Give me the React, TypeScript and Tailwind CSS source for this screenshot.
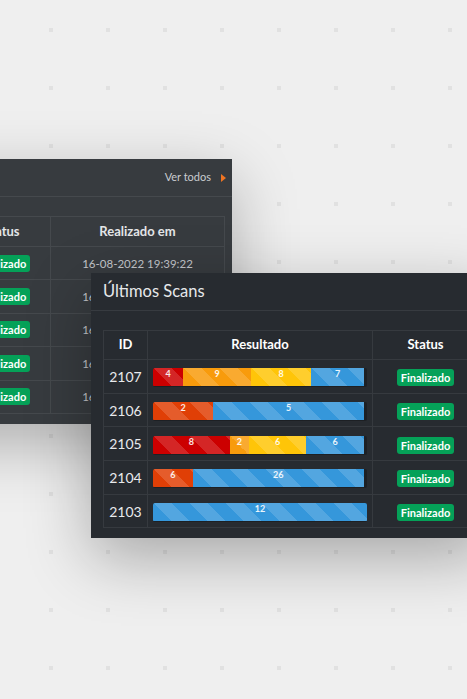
const font = { fontFamily: "Lato, 'Noto Sans', sans-serif" };

type Level = "critical" | "high" | "medium" | "low" | "info";

const segColor: Record<Level, string> = {
    critical: "bg-[#cc0000]",
    high: "bg-[#e03f06]",
    medium: "bg-[#f89b0c]",
    low: "bg-[#ffc508]",
    info: "bg-[#3597db]",
};

const scans: { id: number; result: [Level, number][] }[] = [
    { id: 2107, result: [["critical", 4], ["medium", 9], ["low", 8], ["info", 7]] },
    { id: 2106, result: [["high", 2], ["info", 5]] },
    { id: 2105, result: [["critical", 8], ["medium", 2], ["low", 6], ["info", 6]] },
    { id: 2104, result: [["high", 6], ["info", 26]] },
    { id: 2103, result: [["info", 12]] },
];

function ResultBar({ result }: { result: [Level, number][] }) {
    const total = result.reduce((s, r) => s + r[1], 0);
    const scale = result.length > 1 ? 98.6 : 100;
    return (
        <div className="flex h-[19px] w-full overflow-hidden rounded-[2px] bg-[#1d2024] pb-px">
            {result.map(([level, n], i) => (
                <div
                    key={i}
                    className={`${segColor[level]} h-full bg-[linear-gradient(45deg,rgba(255,255,255,.15)_25%,transparent_25%,transparent_50%,rgba(255,255,255,.15)_50%,rgba(255,255,255,.15)_75%,transparent_75%,transparent)] bg-[length:36px_36px] text-center text-[9px] font-bold leading-[11px] text-white/90`}
                    style={{ width: `${(n / total) * scale}%` }}
                >
                    {n}
                </div>
            ))}
        </div>
    );
}

function Badge() {
    return (
        <span className="inline-block h-[17px] w-[57px] rounded-[3px] bg-[#05a158] text-center text-[11px] font-bold leading-[17px] text-white">
            Finalizado
        </span>
    );
}

function Dots() {
    return (
        <svg className="absolute inset-0" width="467" height="699">
            <defs>
                <pattern id="dots" x="49" y="28" width="57" height="58" patternUnits="userSpaceOnUse">
                    <rect x="0" y="0" width="4" height="4" fill="#e1e1e1" />
                </pattern>
            </defs>
            <rect width="467" height="699" fill="url(#dots)" />
        </svg>
    );
}

function BackPanel() {
    return (
        <div className="absolute left-[-212px] top-[159px] w-[444px] bg-[#373b3f] shadow-[0_20px_60px_rgba(0,0,0,0.28)]">
            <div className="flex h-[38px] items-center justify-end gap-[10px] border-b border-[#45494d] pr-[6px]">
                <span className="text-[11px] text-[#c9ccd0]">Ver todos</span>
                <span className="h-0 w-0 border-y-[4px] border-l-[5px] border-y-transparent border-l-[#ee7422]" />
            </div>
            <div className="px-[7px] pb-[10px] pt-[19px]">
                <table className="w-full table-fixed border-collapse border border-[#45494d]">
                    <colgroup>
                        <col className="w-[44px]" />
                        <col />
                        <col className="w-[98px]" />
                        <col className="w-[174px]" />
                    </colgroup>
                    <thead>
                        <tr className="h-[30px] text-[13px] font-bold text-[#e4e6e8]">
                            <th className="border border-[#45494d]">ID</th>
                            <th className="border border-[#45494d]">Resultado</th>
                            <th className="border border-[#45494d]">Status</th>
                            <th className="border border-[#45494d]">Realizado em</th>
                        </tr>
                    </thead>
                    <tbody>
                        {[0, 1, 2, 3, 4].map((i) => (
                            <tr key={i} className="h-[33.4px] text-[11.5px] text-[#c3c6ca]">
                                <td className="border border-[#45494d] text-center">{2102 - i}</td>
                                <td className="border border-[#45494d]" />
                                <td className="border border-[#45494d] text-center">
                                    <Badge />
                                </td>
                                <td className="border border-[#45494d] text-center">16-08-2022 19:39:22</td>
                            </tr>
                        ))}
                    </tbody>
                </table>
            </div>
        </div>
    );
}

function FrontPanel() {
    return (
        <div className="absolute left-[91px] top-[273px] w-[400px] bg-[#272b30] shadow-[0_20px_60px_rgba(0,0,0,0.3)]">
            <div className="flex h-[38px] items-center border-b border-[#373b40] pl-[12px]">
                <h2 className="text-[16.5px] leading-none text-[#e6e8ea]">Últimos Scans</h2>
            </div>
            <div className="px-[12px] pb-[10px] pt-[19px]">
                <table className="w-full table-fixed border-collapse border border-[#363a3f]">
                    <colgroup>
                        <col className="w-[44px]" />
                        <col className="w-[225px]" />
                        <col />
                    </colgroup>
                    <thead>
                        <tr className="h-[29px] text-[13px] font-bold text-white">
                            <th className="border border-[#363a3f]">ID</th>
                            <th className="border border-[#363a3f]">Resultado</th>
                            <th className="border border-[#363a3f]">Status</th>
                        </tr>
                    </thead>
                    <tbody>
                        {scans.map((s) => (
                            <tr key={s.id} className="h-[33.7px]">
                                <td className="border border-[#363a3f] text-center text-[14px] text-[#e8eaec]">{s.id}</td>
                                <td className="border border-[#363a3f] px-[5px] pt-[3px]">
                                    <ResultBar result={s.result} />
                                </td>
                                <td className="border border-[#363a3f] text-center">
                                    <Badge />
                                </td>
                            </tr>
                        ))}
                    </tbody>
                </table>
            </div>
        </div>
    );
}

export default function App() {
    return (
        <div className="relative h-[699px] w-[467px] overflow-hidden bg-[#efefef]" style={font}>
            <Dots />
            <BackPanel />
            <FrontPanel />
        </div>
    );
}
